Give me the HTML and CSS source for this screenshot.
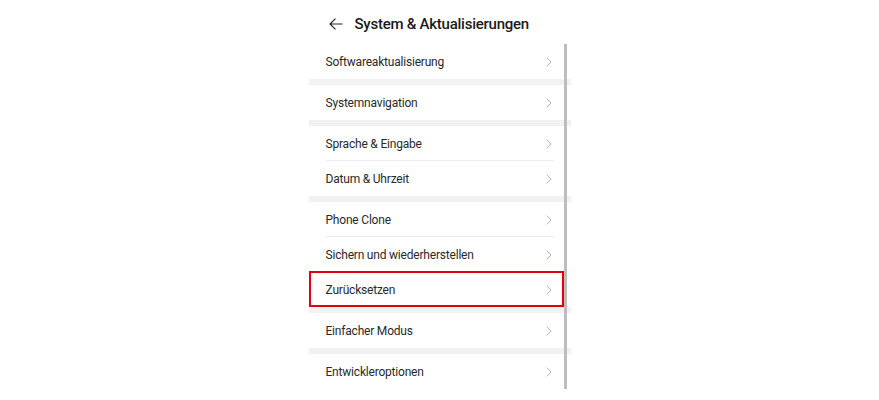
FILE: index.html
```html
<!DOCTYPE html>
<html lang="de">
<head>
<meta charset="utf-8">
<title>System &amp; Aktualisierungen</title>
<link rel="stylesheet" href="styles.css">
</head>
<body>
<div class="screen">
  <header class="topbar">
    <svg class="back" width="14" height="12" viewBox="0 0 14 12" aria-hidden="true">
      <path d="M13.5 6H1M6.5 0.6L1 6l5.5 5.4" fill="none" stroke="#222" stroke-width="1.2"/>
    </svg>
    <h1 class="title">System &amp; Aktualisierungen</h1>
  </header>
  <div class="list">
    <section class="group">
      <div class="row"><span>Softwareaktualisierung</span><svg class="chev" width="6" height="10" viewBox="0 0 6 10"><path d="M0.8 0.6L5 5 0.8 9.4" fill="none" stroke="#b3b3b3" stroke-width="1"/></svg></div>
    </section>
    <section class="group">
      <div class="row"><span>Systemnavigation</span><svg class="chev" width="6" height="10" viewBox="0 0 6 10"><path d="M0.8 0.6L5 5 0.8 9.4" fill="none" stroke="#b3b3b3" stroke-width="1"/></svg></div>
    </section>
    <section class="group">
      <div class="row"><span>Sprache &amp; Eingabe</span><svg class="chev" width="6" height="10" viewBox="0 0 6 10"><path d="M0.8 0.6L5 5 0.8 9.4" fill="none" stroke="#b3b3b3" stroke-width="1"/></svg></div>
      <div class="row"><span>Datum &amp; Uhrzeit</span><svg class="chev" width="6" height="10" viewBox="0 0 6 10"><path d="M0.8 0.6L5 5 0.8 9.4" fill="none" stroke="#b3b3b3" stroke-width="1"/></svg></div>
    </section>
    <section class="group">
      <div class="row"><span>Phone Clone</span><svg class="chev" width="6" height="10" viewBox="0 0 6 10"><path d="M0.8 0.6L5 5 0.8 9.4" fill="none" stroke="#b3b3b3" stroke-width="1"/></svg></div>
      <div class="row"><span>Sichern und wiederherstellen</span><svg class="chev" width="6" height="10" viewBox="0 0 6 10"><path d="M0.8 0.6L5 5 0.8 9.4" fill="none" stroke="#b3b3b3" stroke-width="1"/></svg></div>
      <div class="row marked"><span>Zurücksetzen</span><svg class="chev" width="6" height="10" viewBox="0 0 6 10"><path d="M0.8 0.6L5 5 0.8 9.4" fill="none" stroke="#b3b3b3" stroke-width="1"/></svg></div>
    </section>
    <section class="group">
      <div class="row"><span>Einfacher Modus</span><svg class="chev" width="6" height="10" viewBox="0 0 6 10"><path d="M0.8 0.6L5 5 0.8 9.4" fill="none" stroke="#b3b3b3" stroke-width="1"/></svg></div>
    </section>
    <section class="group">
      <div class="row last"><span>Entwickleroptionen</span><svg class="chev" width="6" height="10" viewBox="0 0 6 10"><path d="M0.8 0.6L5 5 0.8 9.4" fill="none" stroke="#b3b3b3" stroke-width="1"/></svg></div>
    </section>
    <div class="scrollbar"></div>
  </div>
</div>
</body>
</html>
```
FILE: styles.css
```css
html, body {
  margin: 0;
  padding: 0;
  background: #fff;
}
body {
  font-family: Roboto, "Noto Sans", "Liberation Sans", sans-serif;
  color: #1f1f1f;
}
.screen {
  width: 262px;
  margin: 0 auto;
}
.topbar {
  height: 44px;
  display: flex;
  align-items: center;
  padding: 3px 0 0 20px;
  box-sizing: border-box;
}
.back {
  display: block;
  margin-top: 1px;
}
.title {
  margin: 0 0 0 12px;
  font-size: 15px;
  font-weight: 500;
  color: #1a1a1a;
  letter-spacing: -0.25px;
}
.list {
  position: relative;
}
.group + .group {
  border-top: 6px solid #f2f2f2;
}
.row {
  position: relative;
  height: 35px;
  display: flex;
  align-items: center;
  justify-content: space-between;
  padding: 0 19px 0 17px;
  font-size: 12px;
  letter-spacing: -0.2px;
  color: #2a2a2a;
}
.row + .row::before,
.last::after {
  content: "";
  position: absolute;
  top: -1px;
  left: 17px;
  right: 17px;
  height: 1px;
  background: #ececec;
}
.last::after {
  top: auto;
  bottom: -1px;
}
.chev {
  display: block;
}
.marked::after {
  content: "";
  position: absolute;
  left: 0;
  top: -1px;
  width: 255px;
  bottom: 0;
  border: 2px solid #e0000f;
  box-sizing: border-box;
}
.scrollbar {
  position: absolute;
  top: 0;
  left: 255px;
  width: 3px;
  height: 356px;
  background: #bdbdbd;
}
```
